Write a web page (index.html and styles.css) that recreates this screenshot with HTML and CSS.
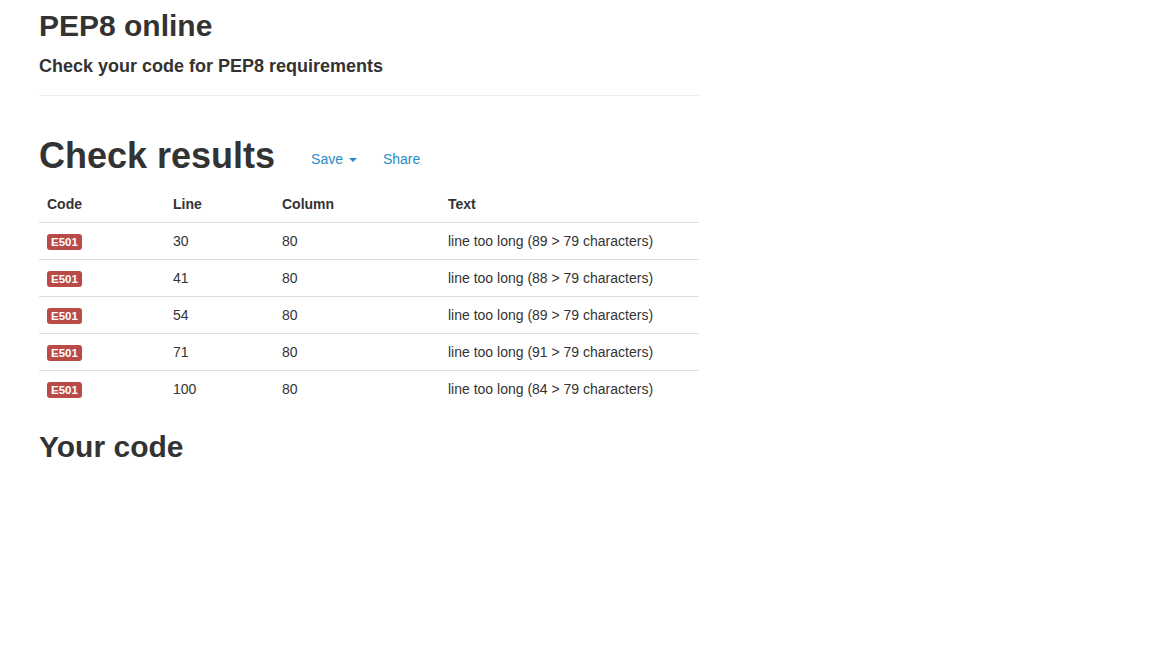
FILE: index.html
```html
<!DOCTYPE html>
<html>
<head>
<meta charset="utf-8">
<title>PEP8 online</title>
<link rel="stylesheet" href="styles.css">
</head>
<body>
<div class="container">
  <div class="page-header">
    <h2 class="title">PEP8 online</h2>
    <h4 class="subtitle">Check your code for PEP8 requirements</h4>
  </div>

  <div class="results-head">
    <h1 class="results-title">Check results</h1>
    <div class="actions">
      <a class="btn-link" href="#">Save <span class="caret"></span></a>
      <a class="btn-link" href="#">Share</a>
    </div>
  </div>

  <table class="table">
    <thead>
      <tr><th class="c-code">Code</th><th class="c-line">Line</th><th class="c-col">Column</th><th>Text</th></tr>
    </thead>
    <tbody>
      <tr><td><span class="label">E501</span></td><td>30</td><td>80</td><td>line too long (89 &gt; 79 characters)</td></tr>
      <tr><td><span class="label">E501</span></td><td>41</td><td>80</td><td>line too long (88 &gt; 79 characters)</td></tr>
      <tr><td><span class="label">E501</span></td><td>54</td><td>80</td><td>line too long (89 &gt; 79 characters)</td></tr>
      <tr><td><span class="label">E501</span></td><td>71</td><td>80</td><td>line too long (91 &gt; 79 characters)</td></tr>
      <tr><td><span class="label">E501</span></td><td>100</td><td>80</td><td>line too long (84 &gt; 79 characters)</td></tr>
    </tbody>
  </table>

  <h2 class="code-title">Your code</h2>
</div>
</body>
</html>
```

FILE: styles.css
```css
* { box-sizing: border-box; }
html, body { margin: 0; padding: 0; background: #fff; }
body {
  font-family: "Liberation Sans", Arial, Helvetica, sans-serif;
  font-size: 14px;
  line-height: 1.42857;
  color: #333;
}
.container {
  width: 660px;
  margin-left: 39px;
}
h1, h2, h4 {
  font-weight: bold;
  line-height: 1.1;
  color: #333;
}
.page-header {
  padding-bottom: 8px;
  border-bottom: 1px solid #eee;
  margin-bottom: 40px;
}
.title {
  font-size: 30px;
  margin: 9px 0 0;
}
.subtitle {
  font-size: 18px;
  margin: 15px 0 10px;
}
.results-head {
  display: flex;
  align-items: baseline;
  margin-bottom: 6px;
}
.results-title {
  font-size: 36px;
  margin: 0;
}
.actions {
  display: flex;
  align-items: baseline;
  margin-left: 24px;
  gap: 2px;
}
.btn-link {
  color: #2a8bc6;
  text-decoration: none;
  font-size: 14px;
  padding: 6px 12px;
  position: relative;
  top: -4px;
}
.caret {
  display: inline-block;
  width: 0;
  height: 0;
  margin-left: 2px;
  vertical-align: middle;
  border-top: 4px solid #2a8bc6;
  border-left: 4px solid transparent;
  border-right: 4px solid transparent;
}
.table {
  width: 660px;
  border-collapse: collapse;
  border-spacing: 0;
}
.table th, .table td {
  padding: 8px;
  text-align: left;
  vertical-align: top;
  line-height: 20px;
  height: 37px;
}
.table th {
  font-weight: bold;
  border-bottom: 1px solid #ddd;
}
.table tbody tr + tr td {
  border-top: 1px solid #ddd;
}
.c-code { width: 126px; }
.c-line { width: 109px; }
.c-col { width: 166px; }
.label {
  display: inline-block;
  background: #b94a48;
  color: #fff;
  font-size: 11.5px;
  font-weight: bold;
  line-height: 12px;
  padding: 2px 4px;
  margin-top: 3px;
  border-radius: 3px;
  vertical-align: top;
}
.code-title {
  font-size: 30px;
  margin: 22px 0 0;
}
```
